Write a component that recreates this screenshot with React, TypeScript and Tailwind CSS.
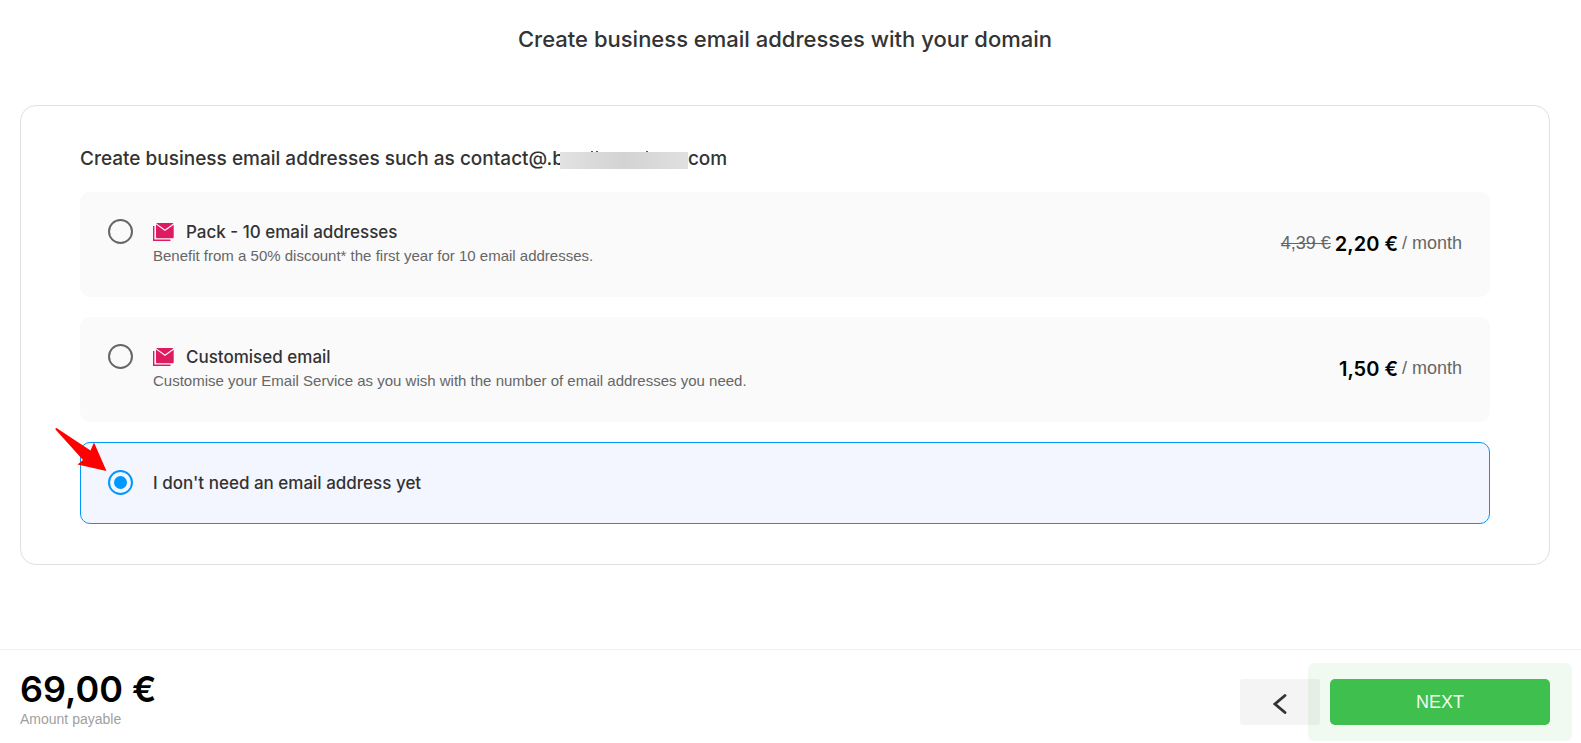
import React, { useState } from 'react';

type EmailOption = {
  id: string;
  title: string;
  description?: string;
  oldPrice?: string;
  price?: string;
};

const options: EmailOption[] = [
  {
    id: 'pack',
    title: 'Pack - 10 email addresses',
    description: 'Benefit from a 50% discount* the first year for 10 email addresses.',
    oldPrice: '4,39 €',
    price: '2,20 €',
  },
  {
    id: 'custom',
    title: 'Customised email',
    description: 'Customise your Email Service as you wish with the number of email addresses you need.',
    price: '1,50 €',
  },
  { id: 'none', title: "I don't need an email address yet" },
];

const MailIcon = () => (
  <svg className="h-[18px] w-[21px] shrink-0" viewBox="0 0 21 18" aria-hidden="true">
    <path d="M0.7 3v14.2H17.5" fill="none" stroke="#de1b60" strokeWidth="1.4" />
    <path d="M3 1.6 12 8l8.7-6.2V14.2a1 1 0 0 1-1 1H4a1 1 0 0 1-1-1Z" fill="#de1b60" />
    <path d="M4 0h15.6q.6 0 .8.5L12 6.4 3.4.5Q3.6 0 4 0Z" fill="#de1b60" />
  </svg>
);

// Red pointer towards the selected radio
const Arrow = () => (
  <svg
    className="pointer-events-none absolute -left-[26px] -top-[15px] h-[44px] w-[52px]"
    viewBox="0 0 52 44"
    aria-hidden="true"
  >
    <path d="M0.5 0.5 1.5 0 35.5 22.5 39 14.500 51.5 43 22.5 36.500 28 32 0.5 1.5Z" fill="#ff0000" />
  </svg>
);

const OptionRow: React.FC<{ option: EmailOption; checked: boolean; onSelect: () => void }> = ({
  option,
  checked,
  onSelect,
}) => (
  <label
    className={`relative flex cursor-pointer rounded-[10px] border px-[27px] ${
      option.price ? 'pb-7 pt-[26px]' : 'pb-7 pt-[27px]'
    } ${checked ? 'border-[#0098ff] bg-[#f3f6fe]' : 'border-[#fafafa] bg-[#fafafa]'}`}
  >
    <input
      type="radio"
      name="email"
      checked={checked}
      onChange={onSelect}
      className="h-[25px] w-[25px] shrink-0 appearance-none rounded-full border-2 border-[#666] bg-clip-content p-[4px] checked:border-[#0098ff] checked:bg-[#0098ff]"
    />
    <div className="ml-5 flex-1">
      <div className="flex h-[25px] items-center gap-3">
        {option.price && <MailIcon />}
        <span className="text-[17px] font-medium leading-6 text-[#333]">{option.title}</span>
      </div>
      {option.description && (
        <p className="font-['Liberation_Sans',sans-serif] text-[15px] leading-6 text-[#666]">
          {option.description}
        </p>
      )}
    </div>
    {option.price && (
      <div className="flex items-center gap-1 font-['Liberation_Sans',sans-serif] text-[18px] text-[#666]">
        {option.oldPrice && <s>{option.oldPrice}</s>}
        <span className="font-['Inter',sans-serif] text-[20px] font-semibold text-black">
          {option.price}
        </span>
        <span>/ month</span>
      </div>
    )}
    {checked && <Arrow />}
  </label>
);

const App: React.FC = () => {
  const [selected, setSelected] = useState('none');

  return (
    <div className="flex min-h-screen flex-col bg-white font-['Inter','Liberation_Sans',sans-serif] text-[#333]">
      <main className="flex-1 pl-5 pr-[31px]">
        <h1 className="pt-6 text-center text-[22px] font-medium leading-[30px]">
          Create business email addresses with your domain
        </h1>

        <section className="mt-[51px] rounded-2xl border border-[#e0e0e0] px-[59px] pb-10 pt-[39px]">
          <h2 className="flex items-center text-[19px] font-medium leading-7">
            Create business email addresses such as contact@.b
            <span className="relative -ml-1 mt-[3px] h-[17px] w-[128px] bg-linear-to-r from-[#e2e2e2] via-[#d3d3d3] to-[#e0e0e0]">
              <span className="absolute -top-px left-[31px] h-px w-[2px] bg-[#555]" />
              <span className="absolute -top-px left-[36px] h-px w-[2px] bg-[#555]" />
              <span className="absolute -top-px left-[86px] h-px w-[2px] bg-[#555]" />
            </span>
            com
          </h2>
          <div className="mt-[19px] flex flex-col gap-5">
            {options.map((option) => (
              <OptionRow
                key={option.id}
                option={option}
                checked={selected === option.id}
                onSelect={() => setSelected(option.id)}
              />
            ))}
          </div>
        </section>
      </main>

      <footer className="flex items-start justify-between border-t border-[#f1f1f5] pb-[15px] pl-5 pr-[31px]">
        <div className="pt-[18px]">
          <p className="text-[36px] font-semibold leading-[42px] text-black">69,00 €</p>
          <p className="font-['Liberation_Sans',sans-serif] text-[14px] leading-[18px] text-[#9f9f9f]">
            Amount payable
          </p>
        </div>
        <div className="flex gap-[10px] pt-[29px]">
          <button
            type="button"
            aria-label="Back"
            className="flex h-[46px] w-20 items-center justify-center rounded-[3px] bg-[#f4f4f4] pt-[3px]"
          >
            <svg className="h-5 w-[14px]" viewBox="0 0 14 20" aria-hidden="true">
              <path d="M12 1.5 2 10l10 8.5" fill="none" stroke="#333" strokeWidth="2.8" strokeLinecap="round" />
            </svg>
          </button>
          <div className="relative">
            <button
              type="button"
              className="h-[46px] w-[220px] rounded-[5px] bg-[#3fbf4e] font-['Liberation_Sans',sans-serif] text-[18px] text-white"
            >
              NEXT
            </button>
            {/* Soft halo that also tints the edge of the back button */}
            <span className="pointer-events-none absolute -inset-x-[22px] -inset-y-4 rounded-md bg-[#3fbf4e]/8" />
          </div>
        </div>
      </footer>
    </div>
  );
};

export default App;
